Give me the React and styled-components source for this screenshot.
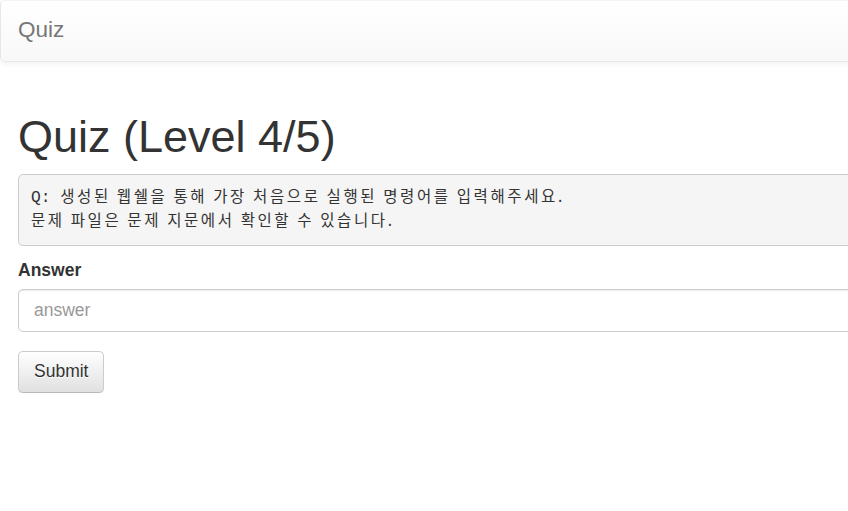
import React from 'react';
import styled, { createGlobalStyle } from 'styled-components';

const GlobalStyle = createGlobalStyle`
  html, body {
    margin: 0;
    padding: 0;
    overflow: hidden;
    background: #fff;
  }
  body {
    font-family: "Liberation Sans", Arial, sans-serif;
    font-size: 17.5px;
    line-height: 1.42857;
    color: #333;
  }
  * {
    box-sizing: border-box;
  }
`;

const Page = styled.div`
  width: 1200px;
`;

const Navbar = styled.nav`
  height: 61.5px;
  margin-bottom: 25px;
  border: 1px solid #e7e7e7;
  border-top-color: #f3f3f3;
  border-radius: 5px;
  background-image: linear-gradient(to bottom, #fff 0, #f8f8f8 100%);
  box-shadow: inset 0 1px 0 rgba(255, 255, 255, 0.15), 0 1px 6px rgba(0, 0, 0, 0.075);
  display: flex;
  align-items: flex-start;
`;

const Brand = styled.a`
  display: block;
  padding: 15.5px 17px;
  font-size: 22.5px;
  line-height: 25px;
  color: #777;
  text-decoration: none;
  text-shadow: 0 1px 0 rgba(255, 255, 255, 0.25);
`;

const Container = styled.main`
  display: flow-root;
  padding: 0 18px;
`;

const Title = styled.h1`
  margin: 25px 0 12.5px;
  font-size: 45px;
  font-weight: 500;
  line-height: 1.1;
  color: #333;
`;

const Question = styled.pre`
  margin: 0 0 12.5px;
  padding: 11.9px;
  font-family: "Liberation Mono", monospace;
  font-size: 16.25px;
  line-height: 23.2px;
  color: #333;
  background: #f5f5f5;
  border: 1px solid #ccc;
  border-radius: 5px;
  white-space: pre-wrap;
`;

const Hangul = styled.span`
  font-family: "Noto Sans CJK KR", monospace;
  font-size: 15.5px;
  line-height: 16px;
  letter-spacing: 2.6px;
`;

const FormGroup = styled.div`
  margin-bottom: 18.75px;
`;

const Label = styled.label`
  display: block;
  margin-bottom: 6.25px;
  font-weight: 700;
`;

const Input = styled.input`
  display: block;
  width: 100%;
  height: 42.5px;
  padding: 7.5px 15px;
  font-family: inherit;
  font-size: 17.5px;
  line-height: 1.42857;
  color: #555;
  background: #fff;
  border: 1px solid #ccc;
  border-radius: 5px;
  box-shadow: inset 0 1px 1px rgba(0, 0, 0, 0.075);
  outline: none;
  &::placeholder {
    color: #999;
  }
`;

const Button = styled.button`
  display: inline-block;
  padding: 7.5px 15px;
  font-family: inherit;
  font-size: 17.5px;
  line-height: 1.42857;
  color: #333;
  background-image: linear-gradient(to bottom, #fff 0, #e0e0e0 100%);
  border: 1px solid #ccc;
  border-color: #ccc #ccc #b9b9b9;
  border-radius: 5px;
  text-shadow: 0 1px 0 #fff;
  box-shadow: inset 0 1px 0 rgba(255, 255, 255, 0.15), 0 1px 1px rgba(0, 0, 0, 0.075);
  cursor: pointer;
`;

const App = () => (
  <Page>
    <GlobalStyle />
    <Navbar>
      <Brand href="#">Quiz</Brand>
    </Navbar>
    <Container>
      <Title>Quiz (Level 4/5)</Title>
      <Question>
        Q: <Hangul>생성된 웹쉘을 통해 가장 처음으로 실행된 명령어를 입력해주세요.</Hangul>
        {'\n'}
        <Hangul>문제 파일은 문제 지문에서 확인할 수 있습니다.</Hangul>
      </Question>
      <form onSubmit={e => e.preventDefault()}>
        <FormGroup>
          <Label htmlFor="answer">Answer</Label>
          <Input id="answer" placeholder="answer" />
        </FormGroup>
        <Button type="submit">Submit</Button>
      </form>
    </Container>
  </Page>
);

export default App;
